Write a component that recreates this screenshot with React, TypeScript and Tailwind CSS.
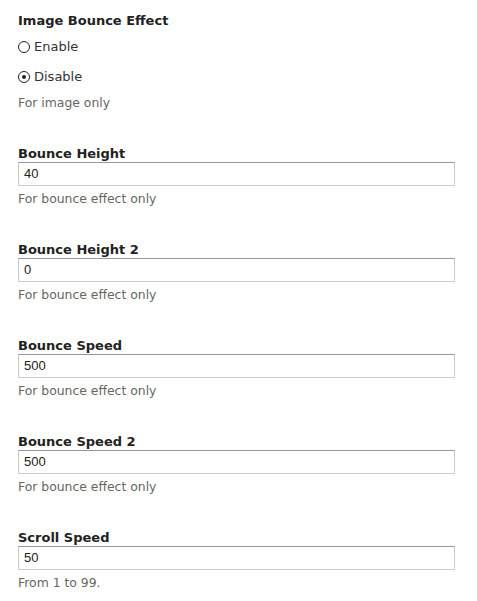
import React from "react";

const fields = [
  { label: "Bounce Height", value: "40", desc: "For bounce effect only" },
  { label: "Bounce Height 2", value: "0", desc: "For bounce effect only" },
  { label: "Bounce Speed", value: "500", desc: "For bounce effect only" },
  { label: "Bounce Speed 2", value: "500", desc: "For bounce effect only" },
  { label: "Scroll Speed", value: "50", desc: "From 1 to 99." },
];

function Radio({ checked, label }: { checked?: boolean; label: string }) {
  return (
    <div className="flex items-center h-[20px] text-[13px] text-[#333]">
      <span className="w-[12px] h-[12px] rounded-full border border-[#222] flex items-center justify-center mr-[4px] bg-white">
        {checked && <span className="w-[4px] h-[4px] rounded-full bg-[#222]" />}
      </span>
      <span>{label}</span>
    </div>
  );
}

export default function App() {
  return (
    <div className="w-[477px] h-[601px] bg-white pl-[18px] pt-[11px]" style={{ fontFamily: '"DejaVu Sans", Verdana, sans-serif' }}>
      <div className="h-[20px] leading-[20px] text-[13px] font-bold text-[#222]">Image Bounce Effect</div>
      <div className="mt-[6px]"><Radio label="Enable" /></div>
      <div className="mt-[10px]"><Radio label="Disable" checked /></div>
      <div className="mt-[6px] h-[20px] leading-[20px] text-[12.4px] text-[#666]">For image only</div>
      {fields.map((f, i) => (
        <div key={i} className={i === 0 ? "mt-[29px]" : "mt-[29px]"}>
          <div className="h-[20px] flex items-end leading-[16px] text-[13px] font-bold text-[#222]">{f.label}</div>
          <div
            className="w-[437px] h-[24px] border border-[#ccc] border-t-[#999] flex items-center pl-[5px] text-[13px] text-[#222]"
            style={{ fontFamily: '"Liberation Sans", Arial, sans-serif' }}
          >
            {f.value}
          </div>
          <div className="mt-[3px] h-[20px] leading-[20px] text-[12.4px] text-[#666]">{f.desc}</div>
        </div>
      ))}
    </div>
  );
}
